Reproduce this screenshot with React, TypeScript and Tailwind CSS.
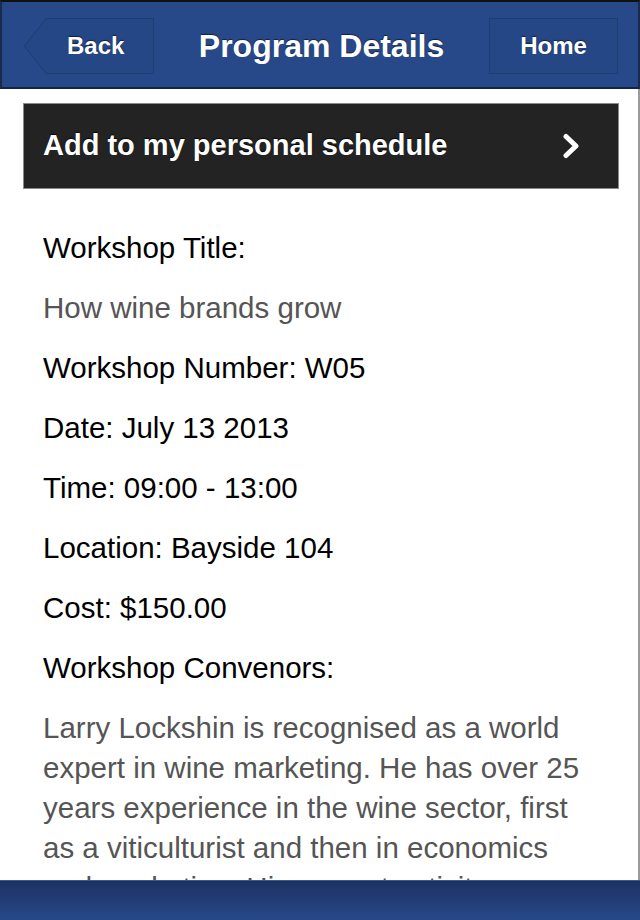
import React from 'react'

const details = [
  { text: 'Workshop Title:', muted: false },
  { text: 'How wine brands grow', muted: true },
  { text: 'Workshop Number: W05', muted: false },
  { text: 'Date: July 13 2013', muted: false },
  { text: 'Time: 09:00 - 13:00', muted: false },
  { text: 'Location: Bayside 104', muted: false },
  { text: 'Cost: $150.00', muted: false },
  { text: 'Workshop Convenors:', muted: false },
]

const bio =
  'Larry Lockshin is recognised as a world expert in wine marketing. He has over 25 years experience in the wine sector, first as a viticulturist and then in economics and marketing. His current activity includes research on wine brands and consumer choice.'

const shadow = '[text-shadow:0_-1px_1px_rgba(0,0,0,0.55)]'

function BackButton() {
  return (
    <button className="relative w-[130px] h-[56px] flex items-center">
      <svg className="absolute inset-0" width="130" height="56" viewBox="0 0 130 56">
        <polygon
          points="22,0.5 129.5,0.5 129.5,55.5 22,55.5 0.5,28"
          fill="#264785"
          stroke="#1f3c73"
          strokeWidth="1"
        />
      </svg>
      <span className={`relative pl-[43px] text-[24px] font-bold text-white ${shadow}`}>Back</span>
    </button>
  )
}

export default function App() {
  return (
    <div
      className="w-[640px] h-[920px] flex flex-col overflow-hidden bg-white"
      style={{ fontFamily: '"Liberation Sans", Arial, sans-serif' }}
    >
      {/* Header */}
      <header className="h-[89px] shrink-0 bg-[#284989] border-t-2 border-x-2 border-t-[#111] border-x-[#1a2a4a] border-b-2 border-b-[#13244a] flex items-center justify-between pl-[22px] pr-[20px] pt-[2px]">
        <BackButton />
        <h1 className={`text-[32px] font-bold text-white ${shadow}`}>Program Details</h1>
        <button
          className={`w-[129px] h-[56px] bg-[#264785] border border-[#1f3c73] text-[24px] font-bold text-white ${shadow}`}
        >
          Home
        </button>
      </header>

      {/* Content */}
      <main className="flex-1 overflow-hidden border-r-2 border-r-[#9a9a9a]">
        <div className="pt-[14px] px-[23px]">
          <button className="w-[596px] h-[86px] bg-[#232323] border border-[#8a8a8a] flex items-center justify-between pl-[19px] pr-[36px]">
            <span className="text-[29px] font-bold text-white [text-shadow:0_-1px_1px_rgba(0,0,0,0.9)]">
              Add to my personal schedule
            </span>
            <svg width="20" height="26" viewBox="0 0 20 26">
              <polyline
                points="4,3.5 14,13 4,22.5"
                fill="none"
                stroke="white"
                strokeWidth="5"
                strokeLinecap="round"
                strokeLinejoin="round"
              />
            </svg>
          </button>
        </div>

        <div className="pt-[29px] pl-[43px] pr-[38px]">
          {details.map((d, i) => (
            <p
              key={i}
              className={`h-[60px] leading-[60px] text-[29.5px] ${d.muted ? 'text-[#555]' : 'text-black'}`}
            >
              {d.text}
            </p>
          ))}
          <p className="mt-[10px] text-[29.5px] leading-[40px] text-[#555]">{bio}</p>
        </div>
      </main>

      {/* Footer */}
      <footer className="h-[40px] shrink-0 bg-gradient-to-b from-[#1c3262] to-[#284989] border-t border-t-[#3a5a94]" />
    </div>
  )
}
